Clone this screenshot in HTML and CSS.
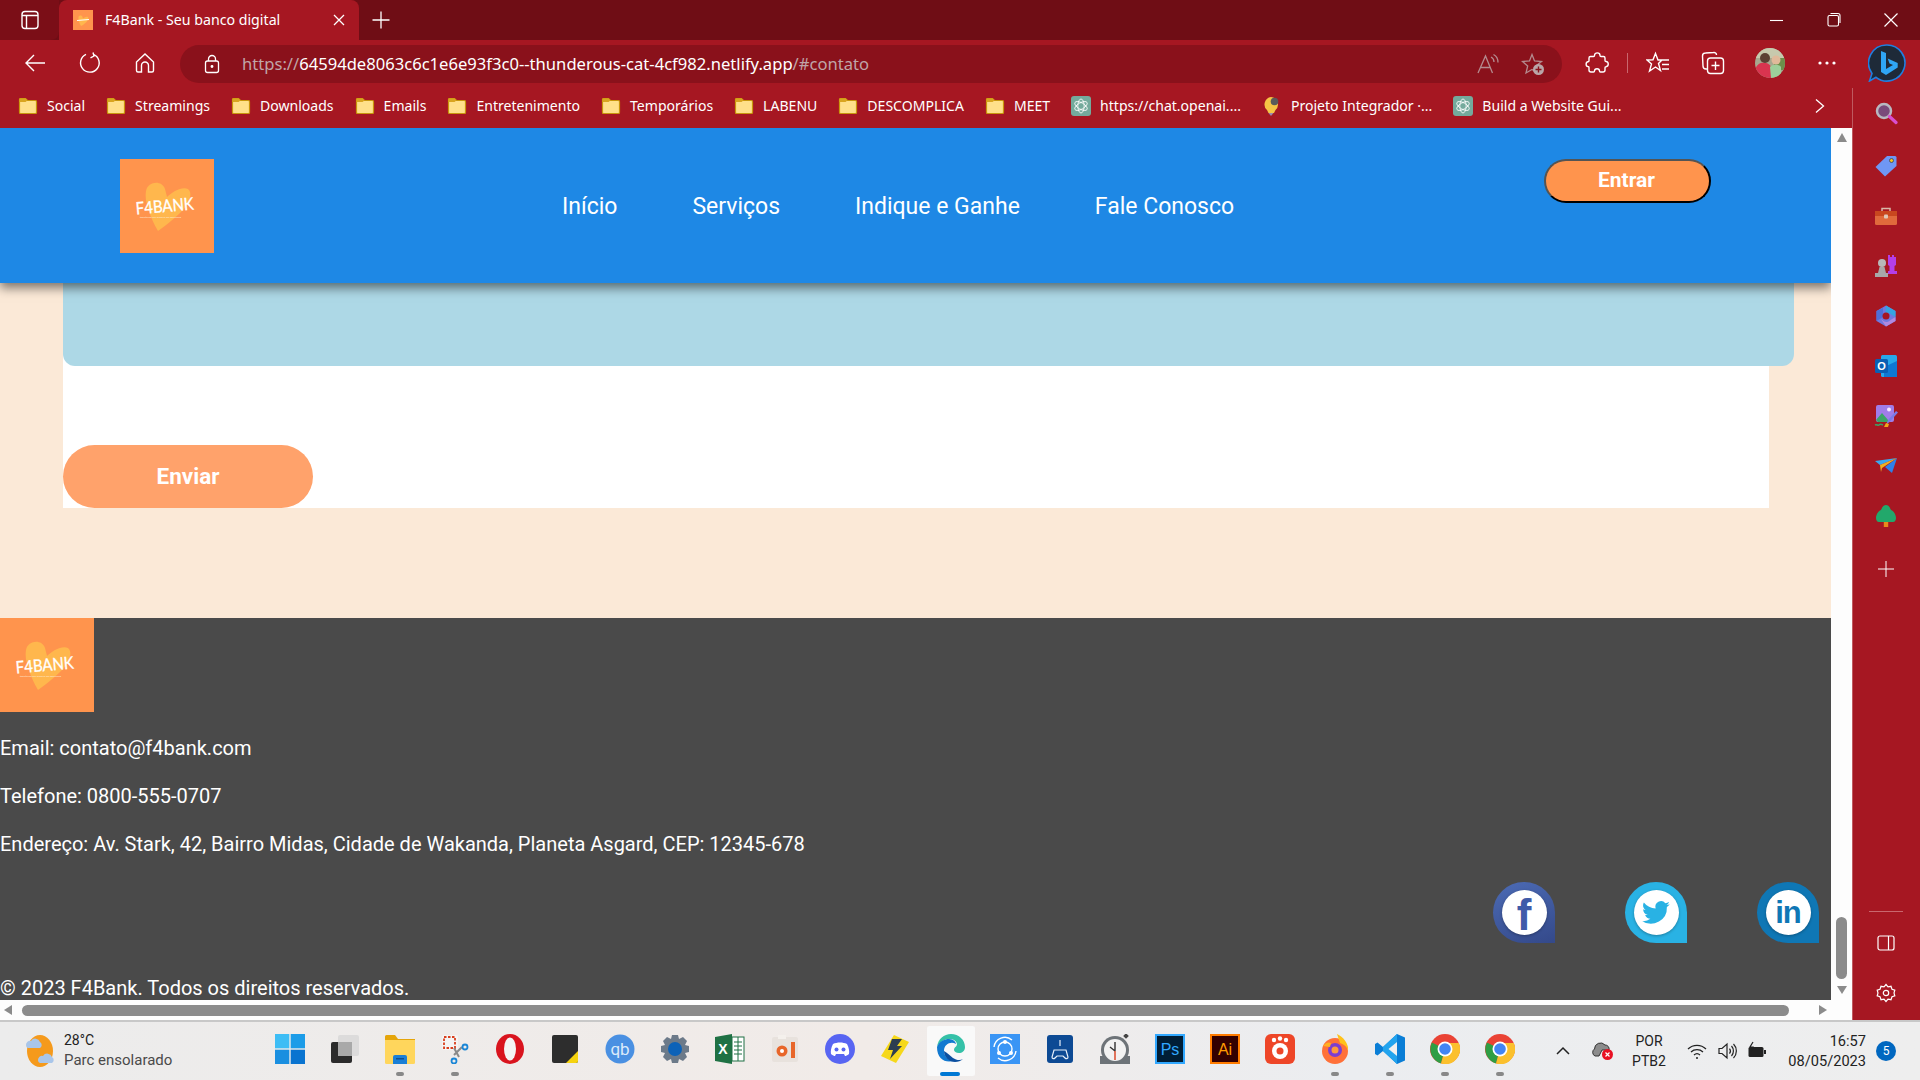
FILE: index.html
```html
<!DOCTYPE html>
<html lang="pt-BR">
<head>
<meta charset="utf-8">
<title>F4Bank - Seu banco digital</title>
<link rel="stylesheet" href="styles.css">
</head>
<body>
<svg class="sprite" aria-hidden="true">
  <symbol id="folder" viewBox="0 0 20 20"><path d="M1.500 3.500a1 1 0 0 1 1-1h5l2 2h8a1 1 0 0 1 1 1v11a1 1 0 0 1-1 1h-15a1 1 0 0 1-1-1z" fill="#ffe08a" stroke="#c8960c" stroke-width="1.200"/><path d="M1.500 3.500a1 1 0 0 1 1-1h5l2 2-2 1.500h-6z" fill="#d9a520"/></symbol>
  <symbol id="knot" viewBox="0 0 20 20"><rect width="20" height="20" rx="3" fill="#74aa9c"/><g fill="none" stroke="#fff" stroke-width=".8"><ellipse cx="10" cy="10" rx="3.200" ry="7"/><ellipse cx="10" cy="10" rx="3.200" ry="7" transform="rotate(60 10 10)"/><ellipse cx="10" cy="10" rx="3.200" ry="7" transform="rotate(120 10 10)"/></g></symbol>
  <symbol id="chrome" viewBox="0 0 30 30"><circle cx="15" cy="15" r="15" fill="#ea4335"/><path d="M15 15 1.900 8.500A15 15 0 0 0 11 29.500z" fill="#2f9e44"/><path d="M15 15l-4 14.500A15 15 0 0 0 28.800 9H15z" fill="#fbc02d"/><circle cx="15" cy="15" r="7.500" fill="#fff"/><circle cx="15" cy="15" r="5.800" fill="#4285f4"/></symbol>
</svg>
<div class="tabstrip">
  <div class="tab-toggle"><svg class="i20" viewBox="0 0 20 20" fill="none" stroke="#fff" stroke-width="1.4"><rect x="2" y="1.5" width="16" height="17" rx="3"/><path d="M2 5.5h16M6.5 5.5v13"/></svg></div>
  <div class="tab">
    <svg class="i20" viewBox="0 0 20 20"><rect width="20" height="20" fill="#ff944d"/><path d="M8 16C6 13 5 9 5.500 7 6 5 9 5 9.500 7L10 8.500C11 7.500 13.500 6 15 7 16 8 15 10 13.500 12 12 13.500 10 15 8 16Z" fill="#ffb74d"/><path d="M4 10.500 16 9.500" stroke="#fff" stroke-width="1.200"/></svg>
    <span class="tab-title">F4Bank - Seu banco digital</span>
    <svg class="i16 tab-close" viewBox="0 0 16 16" stroke="#fff" stroke-width="1.300"><path d="M3 3l10 10M13 3L3 13"/></svg>
  </div>
  <svg class="i20 tab-plus" viewBox="0 0 20 20" stroke="#fff" stroke-width="1.300"><path d="M10 1.500v17M1.500 10h17"/></svg>
  <div class="win-controls">
    <svg class="i16" viewBox="0 0 16 16" stroke="#fff" stroke-width="1.100"><path d="M1 8.500h13"/></svg>
    <svg class="i16" viewBox="0 0 16 16" fill="none" stroke="#fff" stroke-width="1.100"><rect x="2" y="3.500" width="10.500" height="10.500" rx="1.500"/><path d="M4.500 1.500h7.500a2 2 0 0 1 2 2v7.500"/></svg>
    <svg class="i16" viewBox="0 0 16 16" stroke="#fff" stroke-width="1.200"><path d="M1.500 1.500l13 13M14.500 1.500l-13 13"/></svg>
  </div>
</div>

<div class="toolbar">
  <div class="nav-buttons">
    <svg class="i22" viewBox="0 0 22 22" fill="none" stroke="#fff" stroke-width="1.400"><path d="M21 11H2M10 3l-8 8 8 8"/></svg>
    <svg class="i22" viewBox="0 0 22 22" fill="none" stroke="#fff" stroke-width="1.400"><path d="M14.500 2.300A9.300 9.300 0 1 1 7 2.400M14 .5l1 3.500-3.500 1.800"/></svg>
    <svg class="i22" viewBox="0 0 22 22" fill="none" stroke="#fff" stroke-width="1.400"><path d="M2.500 10 11 2l8.500 8v8.500a1.500 1.500 0 0 1-1.500 1.500h-3.500v-6.500a3.500 3.500 0 0 0-7 0V20H4a1.500 1.500 0 0 1-1.500-1.500z"/></svg>
  </div>
  <div class="address">
    <svg class="i20" viewBox="0 0 20 20" fill="none" stroke="#fff" stroke-width="1.300"><rect x="3.500" y="7" width="13" height="11.500" rx="2"/><path d="M6.500 7V5a3.500 3.500 0 0 1 7 0v2"/><circle cx="10" cy="12.500" r=".8" fill="#fff"/></svg>
    <div class="url"><span class="url-dim">https://</span>64594de8063c6c1e6e93f3c0--thunderous-cat-4cf982.netlify.app<span class="url-dim">/#contato</span></div>
    <svg class="i24 addr-read" viewBox="0 0 24 24" fill="none" stroke="#b48a8e" stroke-width="1.300"><path d="M2 21 9.500 4l7 17M4.500 15.500h10M15 5c2 1 3 3 3 5M17.500 2.500c3 1.500 4.500 4.500 4.500 8"/></svg>
    <svg class="i24 addr-star" viewBox="0 0 24 24"><path d="M11 2.500 13.500 9l7 .5-5.500 4.500 1.700 7L11 17.500 5 21l1.700-7L1.500 9.500l7-.5z" fill="none" stroke="#b48a8e" stroke-width="1.300"/><circle cx="17.500" cy="17.500" r="5.500" fill="#b9a6a8"/><path d="M17.500 14.500v6M14.500 17.500h6" stroke="#8a111b" stroke-width="1.400"/></svg>
  </div>
  <svg class="i24 tool-ext" viewBox="0 0 24 24" fill="none" stroke="#fff" stroke-width="1.400"><path d="M9.500 4.500c0-3.500 5.500-3.500 5.500 0 0 .8 .5 1 1 1h2.500a1.500 1.500 0 0 1 1.500 1.500v2.500c0 .5 .3 1 1 1 3 .2 3 5 0 5.200-.7 0-1 .5-1 1v2.300a2 2 0 0 1-2 2h-2.500c-.6 0-1-.4-1-1 0-3-5-3-5 0 0 .6-.4 1-1 1H6a2 2 0 0 1-2-2v-2.500c0-.6-.4-1-1-1-2.500-.2-2.500-4.500 0-4.800 .6 0 1-.4 1-1V7a1.500 1.500 0 0 1 1.500-1.500H8.500c.6 0 1-.4 1-1z"/></svg>
  <div class="tool-divider"></div>
  <svg class="i24 tool-fav" viewBox="0 0 24 24" fill="none" stroke="#fff" stroke-width="1.400"><path d="M9.500 2.500 12 9h4l-3.500 3.500 2 7-5-3.500-6 4 2-7L1 9l6-.2zM15 9h8M16 13.500h7M16 18h7"/></svg>
  <svg class="i24 tool-coll" viewBox="0 0 24 24" fill="none" stroke="#fff" stroke-width="1.400"><path d="M7 18H5a3 3 0 0 1-3-3L1.500 5A3 3 0 0 1 4.500 2l8-.5a2.500 2.500 0 0 1 3 2.500"/><rect x="6.500" y="7" width="16" height="15.500" rx="3"/><path d="M14.500 10.500v8.500M10.500 14.500h8"/></svg>
  <svg class="avatar" viewBox="0 0 30 30"><defs><clipPath id="ava"><circle cx="15" cy="15" r="15"/></clipPath></defs><g clip-path="url(#ava)"><rect width="30" height="30" fill="#a7a78f"/><rect y="0" width="30" height="10" fill="#c7c9ad"/><rect x="19" y="10" width="11" height="12" fill="#6d8f4a"/><path d="M0 22c2-7 7-8 11-7 5 1 7 6 8 15H0z" fill="#d9344f"/><circle cx="10" cy="10" r="5" fill="#5c4033"/><circle cx="21" cy="12" r="4.500" fill="#e0b99a"/><path d="M15 19c2-3 9-3 11 0v11H16z" fill="#9ccf9a"/></g></svg>
  <svg class="i24 tool-more" viewBox="0 0 24 24" fill="#fff"><circle cx="5" cy="12" r="1.600"/><circle cx="12" cy="12" r="1.600"/><circle cx="19" cy="12" r="1.600"/></svg>
  <svg class="bing" viewBox="0 0 38 38"><path d="M19 1a18 18 0 1 1-11 32.300L1.500 37 4 29.500A18 18 0 0 1 19 1z" fill="#1e2a38" stroke="#1f7fe0" stroke-width="1.600"/><path d="M13 7l5 2v16l7-4-3.500-1.500-1.800-5 10 4.500v4.500L18 31l-5-3z" fill="#2fa6f5"/></svg>
</div>

<div class="workspace">
  <div class="main-col">
    <div class="bookmarks">
      <div class="bm"><svg class="folder"><use href="#folder"/></svg><span>Social</span></div>
      <div class="bm"><svg class="folder"><use href="#folder"/></svg><span>Streamings</span></div>
      <div class="bm"><svg class="folder"><use href="#folder"/></svg><span>Downloads</span></div>
      <div class="bm"><svg class="folder"><use href="#folder"/></svg><span>Emails</span></div>
      <div class="bm"><svg class="folder"><use href="#folder"/></svg><span>Entretenimento</span></div>
      <div class="bm"><svg class="folder"><use href="#folder"/></svg><span>Temporários</span></div>
      <div class="bm"><svg class="folder"><use href="#folder"/></svg><span>LABENU</span></div>
      <div class="bm"><svg class="folder"><use href="#folder"/></svg><span>DESCOMPLICA</span></div>
      <div class="bm"><svg class="folder"><use href="#folder"/></svg><span>MEET</span></div>
      <div class="bm"><svg class="folder"><use href="#knot"/></svg><span>https://chat.openai....</span></div>
      <div class="bm"><svg class="folder" viewBox="0 0 20 20"><path d="M9 1a7.500 7.500 0 0 1 4.500 13l-1.500 3H6.500l-1.500-3A7.500 7.500 0 0 1 9 1z" fill="#f6c445"/><circle cx="12.500" cy="5.500" r="3.800" fill="#5a5a5a"/><path d="M6.500 17h5l-2.500 3z" fill="#9a8ab0"/></svg><span>Projeto Integrador ·...</span></div>
      <div class="bm"><svg class="folder"><use href="#knot"/></svg><span>Build a Website Gui...</span></div>
      <svg class="i16 bm-more" viewBox="0 0 16 16" fill="none" stroke="#fff" stroke-width="1.300"><path d="M4 1.500l7.500 6.500L4 14.500"/></svg>
    </div>
    <div class="view">
      <div class="page-row">
        <div class="page">
          <header class="site-header">
            <svg class="logo" viewBox="0 0 94 94"><rect width="94" height="94" fill="#ff944d"/><path d="M38 72C30 58 24 42 26 32 28 22 42 21 45 30L47 38C52 33 62 27 68 30 73 34 70 44 62 52 54 60 44 68 38 72Z" fill="#ffb74d"/><text x="16" y="53" class="logo-name" textLength="58" lengthAdjust="spacingAndGlyphs" transform="rotate(-5 45 50)">F4BANK</text><text x="20" y="58.500" class="logo-sub">transforme seu dinheiro em excelência</text></svg>
            <nav class="site-nav"><a>Início</a><a>Serviços</a><a>Indique e Ganhe</a><a>Fale Conosco</a></nav>
            <button class="enter">Entrar</button>
          </header>
          <section class="contact">
            <form class="contact-form">
              <div class="message"></div>
              <button class="send" type="button">Enviar</button>
            </form>
          </section>
          <footer class="site-footer">
            <svg class="logo" viewBox="0 0 94 94"><rect width="94" height="94" fill="#ff944d"/><path d="M38 72C30 58 24 42 26 32 28 22 42 21 45 30L47 38C52 33 62 27 68 30 73 34 70 44 62 52 54 60 44 68 38 72Z" fill="#ffb74d"/><text x="16" y="53" class="logo-name" textLength="58" lengthAdjust="spacingAndGlyphs" transform="rotate(-5 45 50)">F4BANK</text><text x="20" y="58.500" class="logo-sub">transforme seu dinheiro em excelência</text></svg>
            <p>Email: contato@f4bank.com</p>
            <p>Telefone: 0800-555-0707</p>
            <p>Endereço: Av. Stark, 42, Bairro Midas, Cidade de Wakanda, Planeta Asgard, CEP: 12345-678</p>
            <div class="socials">
              <div class="social fb"><div class="social-in"><span class="fb-f">f</span></div></div>
              <div class="social tw"><div class="social-in"><svg class="tw-bird" viewBox="0 0 24 24"><path d="M23 4.900c-.8.400-1.700.6-2.600.7.900-.6 1.700-1.400 2-2.500-.9.500-1.900.9-2.900 1.100A4.500 4.500 0 0 0 11.700 8.300C8 8.100 4.600 6.300 2.300 3.500c-1.200 2.100-.6 4.700 1.400 6-.7 0-1.400-.2-2-.6 0 2.200 1.500 4.100 3.600 4.500-.7.200-1.400.2-2 .1.600 1.800 2.300 3.100 4.200 3.100A9 9 0 0 1 1 18.500 12.800 12.800 0 0 0 20.700 7.100c.9-.6 1.700-1.400 2.300-2.200z" fill="#29b2e4"/></svg></div></div>
              <div class="social li"><div class="social-in"><span class="li-in">in</span></div></div>
            </div>
            <div class="copy">© 2023 F4Bank. Todos os direitos reservados.</div>
          </footer>
        </div>
        <div class="vscroll">
          <i class="arrow-up"></i>
          <i class="vthumb"></i>
          <i class="arrow-down"></i>
        </div>
      </div>
      <div class="hscroll">
        <i class="arrow-left"></i>
        <i class="hthumb"></i>
        <i class="arrow-right"></i>
      </div>
    </div>
  </div>
  <aside class="sidebar">
    <svg class="side-icon side-first" viewBox="0 0 24 24"><circle cx="10" cy="10" r="7" fill="#7a4a7a" stroke="#b8b8c0" stroke-width="2.500"/><path d="M15.500 15.500 22 21.500" stroke="#d94fd0" stroke-width="3.200" stroke-linecap="round"/></svg>
    <svg class="side-icon" viewBox="0 0 24 24"><path d="M13 2h8a1.500 1.500 0 0 1 1.500 1.500V12L11 22.500 1.500 13z" fill="#6f97f5"/><circle cx="17.500" cy="6.500" r="2" fill="#f5c518" stroke="#34406a" stroke-width=".8"/></svg>
    <svg class="side-icon" viewBox="0 0 24 24"><path d="M8 7V4.500h8V7" fill="none" stroke="#d9b8a8" stroke-width="1.500"/><rect x="1" y="7" width="22" height="14" rx="1.500" fill="#e06a3c"/><rect x="1" y="7" width="22" height="5" fill="#c9471f"/><rect x="10" y="10.500" width="4" height="4" rx="1" fill="#e0c8b8"/></svg>
    <svg class="side-icon" viewBox="0 0 24 24"><path d="M14 1h2v2h2V1h2v2h2V1v10l-1.500 1v5H23v3h-9v-3h1.500v-5L14 11z" fill="#b43ee8"/><circle cx="8" cy="9" r="4" fill="#b8b8b8"/><path d="M5.500 13h5l1.500 6h2v4H1v-4h3z" fill="#a8a8a8"/></svg>
    <svg class="side-icon" viewBox="0 0 24 24"><path d="M12 1.500 21.500 7v10L12 22.500 2.500 17V7z" fill="#6f79e0"/><path d="M12 1.500 21.500 7v6l-5-3a5 5 0 0 0-5-1z" fill="#35a4e0"/><path d="M2.500 7 9 4v9l-6.500 4z" fill="#4f6fd8"/><path d="M7 15l5 7.500 9.500-5.500v-4l-5 3a5 5 0 0 1-7 1z" fill="#b089e0"/><circle cx="12" cy="12" r="3.500" fill="#a61722"/></svg>
    <svg class="side-icon" viewBox="0 0 24 24"><rect x="7" y="1" width="16" height="22" rx="1.500" fill="#28a8ea"/><path d="M10 13l13-6v16H10z" fill="#0f78d4"/><rect x="1" y="5" width="13" height="14" rx="1.500" fill="#0a5fb4"/><text x="7.500" y="16" class="side-o">O</text></svg>
    <svg class="side-icon" viewBox="0 0 24 24"><rect x="2" y="1" width="18" height="17" rx="2" fill="#a07ce8"/><circle cx="15" cy="5.500" r="2" fill="#f3e6ff"/><path d="M2 16l6-7 6 7v2H4z" fill="#3aa566"/><path d="M12 21l2-5 8-9 2 1.500-8 9z" fill="#7a7ae8"/><path d="M10 23l2-4 3 1-1 3z" fill="#f0a818"/><path d="M1 21c2-1 3 1 4 0s2-1 4 0" fill="none" stroke="#3aa566" stroke-width="1.500"/></svg>
    <svg class="side-icon" viewBox="0 0 24 24"><path d="M1 7 23 4 6 11z" fill="#3aa8f0"/><path d="M23 4 18 19l-7-6z" fill="#2f80e8"/><path d="M6 11 23 4 8 14l-1 4z" fill="#f0b020"/></svg>
    <svg class="side-icon" viewBox="0 0 24 24"><path d="M12 1c3 0 4 3 5 5 3 1 5 5 5 8 0 2-1 4-3 4H5c-2 0-3-2-3-4 0-3 2-7 5-8 1-2 2-5 5-5z" fill="#22a86b"/><rect x="9.800" y="18" width="4.400" height="5" fill="#e88a1a"/></svg>
    <svg class="side-plus" viewBox="0 0 16 16" stroke="#fff" stroke-width="1"><path d="M8 0v16M0 8h16"/></svg>
    <div class="side-rule"></div>
    <svg class="side-tool" viewBox="0 0 20 20" fill="none" stroke="#fff" stroke-width="1.200"><rect x="2" y="3" width="16" height="14" rx="2"/><path d="M12.500 3v14"/></svg>
    <svg class="side-tool" viewBox="0 0 20 20" fill="none" stroke="#fff" stroke-width="1.200"><path d="M10 1.500l2 2.300 3-.5 1 2.900 2.800 1L18 10l.8 2.800-2.800 1-1 2.900-3-.5-2 2.300-2-2.300-3 .5-1-2.900-2.800-1L2 10l-.8-2.800 2.800-1 1-2.900 3 .5z"/><circle cx="10" cy="10" r="2.700"/></svg>
  </aside>
</div>

<div class="taskbar">
  <div class="weather">
    <svg class="weather-icon" viewBox="0 0 32 36"><ellipse cx="16" cy="18" rx="13" ry="16" fill="#f59a1c"/><path d="M2 12a4 4 0 0 1 5-4 5 5 0 0 1 9 1 3.500 3.500 0 0 1 0 6H4a3 3 0 0 1-2-3z" fill="#a9c6ea"/><path d="M14 27a4 4 0 0 1 5-4 5 5 0 0 1 9 1 3.500 3.500 0 0 1 0 6H16a3 3 0 0 1-2-3z" fill="#a9c6ea"/></svg>
    <div class="weather-text"><div class="w-temp">28°C</div><div class="w-desc">Parc ensolarado</div></div>
  </div>
  <div class="apps">
    <div class="app"><svg class="app-i" viewBox="0 0 30 30"><rect x="0" y="0" width="14.300" height="14.300" fill="#3dbdf5"/><rect x="15.700" y="0" width="14.300" height="14.300" fill="#1c9ce8"/><rect x="0" y="15.700" width="14.300" height="14.300" fill="#1a8fe0"/><rect x="15.700" y="15.700" width="14.300" height="14.300" fill="#0a74d0"/></svg></div>
    <div class="app"><svg class="app-i" viewBox="0 0 30 30"><rect x="1" y="8" width="21" height="21" rx="2" fill="#2b2b2b"/><rect x="8" y="1" width="21" height="21" rx="2" fill="#d8d8d8" fill-opacity=".85"/><rect x="8" y="8" width="14" height="14" fill="#a9a9a9"/></svg></div>
    <div class="app"><svg class="app-i" viewBox="0 0 30 30"><path d="M0 2.500A1.500 1.500 0 0 1 1.500 1H10l3 4h17v4H0z" fill="#e5a50a"/><path d="M0 6h30v22.500a1.500 1.500 0 0 1-1.500 1.500h-27A1.500 1.500 0 0 1 0 28.500z" fill="#ffd65c"/><path d="M8 23a2 2 0 0 1 2-2h10a2 2 0 0 1 2 2v7H8z" fill="#1a7fd6"/><rect x="11" y="24" width="8" height="1.500" fill="#0f4f90"/></svg><i class="dot"></i></div>
    <div class="app"><svg class="app-i" viewBox="0 0 30 30"><rect x="2" y="1" width="16" height="15" rx="2" fill="#f4f4f4"/><rect x="4" y="3" width="11" height="11" fill="none" stroke="#d9401f" stroke-width="1.800" stroke-dasharray="2.500 1.500"/><path d="M14 14l5 9M22 13l-8 8" stroke="#8a8a8a" stroke-width="2"/><circle cx="25" cy="13" r="2.500" fill="none" stroke="#1a86d6" stroke-width="1.800"/><circle cx="14" cy="27" r="2.500" fill="none" stroke="#1a86d6" stroke-width="1.800"/></svg><i class="dot"></i></div>
    <div class="app"><svg class="app-i" viewBox="0 0 30 30"><ellipse cx="15" cy="15" rx="14" ry="15" fill="#d9141e"/><ellipse cx="15" cy="15" rx="6" ry="11.500" fill="#f4f4f4"/></svg></div>
    <div class="app"><svg class="app-i" viewBox="0 0 30 30"><rect x="2" y="1" width="26" height="28" rx="2" fill="#2d2d2d"/><path d="M28 17v10a2 2 0 0 1-2 2H16z" fill="#f6d30f"/></svg></div>
    <div class="app"><svg class="app-i" viewBox="0 0 30 30"><circle cx="15" cy="15" r="14.500" fill="#4a90e2"/><text x="15" y="21" class="qb">qb</text></svg></div>
    <div class="app"><svg class="app-i" viewBox="0 0 30 30"><path d="M12 1h6l1 4 4-2 4 4-2 4 4 1v6l-4 1 2 4-4 4-4-2-1 4h-6l-1-4-4 2-4-4 2-4-4-1v-6l4-1-2-4 4-4 4 2z" fill="#6c7a89"/><circle cx="15" cy="15" r="7" fill="#0c62b8"/></svg></div>
    <div class="app"><svg class="app-i" viewBox="0 0 30 30"><path d="M0 3 17 0v30L0 27z" fill="#1f7144"/><rect x="17" y="3" width="12" height="24" fill="#fff" stroke="#1f7144"/><path d="M19 8h8M19 12h8M19 16h8M19 20h8M23 3v24" stroke="#1f7144" stroke-width="1"/><text x="8" y="20" class="xl">X</text></svg></div>
    <div class="app"><svg class="app-i" viewBox="0 0 30 30"><rect x="2" y="3" width="26" height="25" rx="2" fill="#e8e2dd"/><rect x="8" y="1" width="8" height="4" fill="#f4f0ec"/><circle cx="12" cy="17" r="5.500" fill="#e8662a"/><circle cx="12" cy="17" r="2" fill="#fff"/><rect x="21" y="8" width="4" height="16" fill="#e8662a"/></svg></div>
    <div class="app"><svg class="app-i" viewBox="0 0 30 30"><ellipse cx="15" cy="15" rx="15" ry="15" fill="#5865f2"/><path d="M8 10c4-2 10-2 14 0 2 4 2.500 7 2 10-2 1.500-3 2-4 2l-1-2H11l-1 2c-1 0-2-.5-4-2-.5-3 0-6 2-10z" fill="#fff"/><circle cx="11.500" cy="15.500" r="2" fill="#5865f2"/><circle cx="18.500" cy="15.500" r="2" fill="#5865f2"/></svg></div>
    <div class="app"><svg class="app-i" viewBox="0 0 30 30"><path d="M14 1 29 8 16 29 1 22z" fill="#f6d81a"/><path d="M12 5h10l-5 7h5L10 25l3-9H8z" fill="#2c3e50"/></svg></div>
    <div class="app app-active"><svg class="app-i" viewBox="0 0 30 30"><path d="M2 13C3 5 9 0 16 0c8 0 14 6 14 13 0 4-3 6-6 6-3 0-5-2-5-3 0-3 3-3 3-6 0-2-3-5-7-5-6 0-11 3-13 8z" fill="#35c1a8"/><path d="M2 13c2-6 8-8 12-8 4 0 7 3 7 5-5-3-12 0-12 7 0 5 4 9 9 10-8 2-16-2-16-14z" fill="#1279d0"/><path d="M9 17c0 6 5 11 11 11 3 0 6-1 8-3-3 2-7 1-10-1-3-2-5-5-9-7z" fill="#0c50a0"/></svg><i class="dot dot-blue"></i></div>
    <div class="app"><svg class="app-i" viewBox="0 0 30 30"><rect width="30" height="30" fill="#3a95f5"/><g fill="none" stroke="#fff" stroke-width="1.400"><circle cx="15" cy="15" r="7"/><path d="M4 13a11 11 0 0 1 18-7M26 17a11 11 0 0 1-18 7"/></g><g fill="#fff"><circle cx="15" cy="8" r="2"/><circle cx="9" cy="19" r="2"/><circle cx="21" cy="19" r="2"/></g></svg></div>
    <div class="app"><svg class="app-i" viewBox="0 0 30 30"><rect x="2" y="1" width="26" height="28" rx="3" fill="#0d4a94"/><path d="M9 16h12l2 7c0 2-2 2-3 1l-2-2h-6l-2 2c-1 1-3 1-3-1zM15 6v6" fill="none" stroke="#e8f0fa" stroke-width="1.200"/></svg></div>
    <div class="app"><svg class="app-i" viewBox="0 0 30 30"><rect y="22" width="30" height="8" fill="#6d7378"/><circle cx="15" cy="16" r="14" fill="#6d7378"/><circle cx="15" cy="16" r="11" fill="#f2f2f2"/><path d="M15 8v9M15 17l-5-4" stroke="#333" stroke-width="1.400"/><path d="M15 17v9" stroke="#d9401f" stroke-width="1.400"/><rect x="24" y="0" width="4" height="4" fill="#444" transform="rotate(45 26 2)"/></svg></div>
    <div class="app"><svg class="app-i" viewBox="0 0 30 30"><rect x="1" y="1" width="28" height="28" fill="#001e36" stroke="#31a8ff" stroke-width="2"/><text x="15" y="21" class="ps">Ps</text></svg></div>
    <div class="app"><svg class="app-i" viewBox="0 0 30 30"><rect x="1" y="1" width="28" height="28" fill="#330000" stroke="#ff7c00" stroke-width="2"/><text x="15" y="21" class="ai">Ai</text></svg></div>
    <div class="app"><svg class="app-i" viewBox="0 0 30 30"><rect width="30" height="30" rx="6" fill="#ee4628"/><circle cx="15" cy="17" r="8" fill="#fff"/><circle cx="15" cy="17" r="3.500" fill="#ee4628"/><circle cx="9" cy="6" r="2.200" fill="#fff"/><circle cx="15" cy="4.500" r="2.200" fill="#fff"/><circle cx="21" cy="6" r="2.200" fill="#fff"/></svg></div>
    <div class="app"><svg class="app-i" viewBox="0 0 30 30"><circle cx="15" cy="17" r="13" fill="#ff7139"/><path d="M17 0c6 3 12 9 11 17-1-5-5-7-8-8z" fill="#ffc21a"/><circle cx="15" cy="16" r="7" fill="#7c3ed0"/><path d="M3 12c3-4 6-4 8-3l-1 4z" fill="#ffb020"/><circle cx="15" cy="16" r="3.500" fill="#ff9a3c"/></svg><i class="dot"></i></div>
    <div class="app"><svg class="app-i" viewBox="0 0 30 30"><path d="M22 0 30 3.500v23L22 30 8 17 2.500 21.500 0 20V10l2.500-1.500L8 13z" fill="#0a7ed6"/><path d="M22 0v30L8 17l-.1-4z" fill="#22a4ee"/><path d="M22 8l-8.500 7 8.500 7z" fill="#f0f0f0"/></svg><i class="dot"></i></div>
    <div class="app"><svg class="app-i"><use href="#chrome"/></svg><i class="dot"></i></div>
    <div class="app"><svg class="app-i"><use href="#chrome"/></svg><i class="dot"></i></div>
  </div>
  <div class="tray">
    <svg class="tray-caret" viewBox="0 0 16 16" fill="none" stroke="#222" stroke-width="1.500"><path d="M2 11l6-6 6 6"/></svg>
    <svg class="tray-cloud" viewBox="0 0 22 20"><path d="M3 15a4 4 0 0 1-.5-7A6 6 0 0 1 13 4a4 4 0 0 1 4 5H10l-3 6z" fill="#8c8c8c" stroke="#333" stroke-width="1"/><circle cx="15.500" cy="13.500" r="5.500" fill="#e81123"/><path d="M13.500 11.500l4 4M17.500 11.500l-4 4" stroke="#fff" stroke-width="1.200"/></svg>
    <div class="lang"><div>POR</div><div>PTB2</div></div>
    <svg class="tray-i" viewBox="0 0 20 20" fill="none" stroke="#222" stroke-width="1.300"><path d="M1 8a13 13 0 0 1 18 0M4 11a9 9 0 0 1 12 0M7 14a4.500 4.500 0 0 1 6 0"/><circle cx="10" cy="17" r="1" fill="#222" stroke="none"/></svg>
    <svg class="tray-i" viewBox="0 0 20 20" fill="none" stroke="#222" stroke-width="1.200"><path d="M2 7.500h3L10 3v14l-5-4.500H2zM12.500 7.500a4 4 0 0 1 0 5M14.500 5a7.500 7.500 0 0 1 0 10M16.500 3a10 10 0 0 1 0 14"/></svg>
    <svg class="tray-i" viewBox="0 0 20 20"><rect x="1.500" y="6" width="15" height="10" rx="1.500" fill="#222"/><rect x="17" y="9" width="2" height="4" fill="#222"/><path d="M6 1 3 6h3L4.500 10" fill="none" stroke="#222" stroke-width="1.200"/></svg>
    <div class="clock"><div>16:57</div><div>08/05/2023</div></div>
    <div class="badge">5</div>
  </div>
</div>
</body>
</html>
```
FILE: styles.css
```css
* { box-sizing: border-box; }
html, body { margin: 0; height: 100%; }
body {
  width: 1920px; height: 1080px; overflow: hidden;
  display: flex; flex-direction: column;
  font-family: Roboto, "Liberation Sans", sans-serif;
  background: #a61722;
}
svg { display: block; flex: none; }
.sprite { display: none; }
.i16 { width: 16px; height: 16px; }
.i20 { width: 20px; height: 20px; }
.i22 { width: 22px; height: 22px; }
.i24 { width: 24px; height: 24px; }

/* tab strip */
.tabstrip { height: 40px; flex: none; display: flex; align-items: center; background: #6f0d15; padding-right: 21px; }
.tab-toggle { width: 59px; height: 40px; display: flex; align-items: center; padding-left: 20px; background: #7b0e17; border-bottom-right-radius: 8px; }
.tab { width: 300px; height: 40px; background: #a61722; border-radius: 8px 8px 0 0; display: flex; align-items: center; padding: 0 12px 0 14px; color: #fff; font-size: 14px; }
.tab-title { margin-left: 12px; padding-bottom: 2px; font-family: "Noto Sans", sans-serif; font-size: 14.2px; }
.tab-close { margin-left: auto; }
.tab-plus { margin-left: 12px; }
.win-controls { margin-left: auto; display: flex; gap: 41px; }

/* toolbar */
.toolbar { height: 44px; flex: none; display: flex; align-items: center; background: #a61722; padding: 2px 0 0 24px; }
.nav-buttons { display: flex; gap: 33px; width: 156px; }
.address { width: 1382px; height: 38px; margin-top: 2px; background: #8a111b; border-radius: 19px; display: flex; align-items: center; padding: 0 17px 0 22px; }
.url { margin-left: 20px; padding-bottom: 2px; font-family: "Noto Sans", sans-serif; font-size: 16.6px; color: #fff; white-space: nowrap; }
.url-dim { color: #c0a5a8; }
.addr-read { margin-left: auto; }
.addr-star { margin-left: 21px; }
.tool-ext { margin-left: 23px; }
.tool-divider { width: 1px; height: 20px; margin-left: 18px; background: #c9676e; }
.tool-fav { margin-left: 18px; }
.tool-coll { margin-left: 31px; }
.avatar { width: 30px; height: 30px; margin-left: 30px; }
.tool-more { margin-left: 30px; }
.bing { width: 38px; height: 38px; margin-left: 29px; }

/* workspace */
.workspace { height: 936px; flex: none; display: flex; }
.main-col { width: 1852px; display: flex; flex-direction: column; }
.bookmarks { height: 44px; flex: none; display: flex; align-items: center; gap: 21px; padding-left: 18px; color: #fff; font-family: "Noto Sans", sans-serif; font-size: 14.05px; white-space: nowrap; }
.bm { display: flex; align-items: center; gap: 9px; }
.bm span { padding-bottom: 2px; }
.folder { width: 20px; height: 20px; }
.bm-more { margin-left: auto; margin-right: 24px; }
.view { flex: 1; display: flex; flex-direction: column; min-height: 0; }
.page-row { height: 872px; display: flex; }
.page { width: 1831px; height: 872px; overflow: hidden; display: flex; flex-direction: column; }

/* site header */
.site-header { height: 155px; flex: none; position: relative; z-index: 2; display: flex; background: #1e88e5; padding-left: 120px; padding-top: 31px; box-shadow: 0 5px 10px rgba(0,0,0,.5); clip-path: inset(0 0 -30px 0); }
.logo { width: 94px; height: 94px; }
.logo-name { font-family: Lato, sans-serif; font-weight: 400; font-size: 17px; fill: #fff; stroke: #fff; stroke-width: .3px; }
.logo-sub { font-family: Roboto, sans-serif; font-size: 2.4px; fill: #ffe9d6; }
.site-nav { display: flex; align-items: center; gap: 75px; margin-left: 348px; height: 94px; color: #fff; font-size: 23px; }
.site-nav a { white-space: nowrap; }
.enter { margin-left: auto; margin-right: 120px; width: 167px; height: 44px; border-radius: 22px; border: 2px outset #000; background: #ff944d; color: #fff; font: 700 21px Roboto, sans-serif; padding: 0 2px 2px 0; }

/* contact section */
.contact { height: 335px; flex: none; background: #fbe9d7; padding-left: 63px; }
.contact-form { width: 1706px; height: 225px; background: #fff; display: flex; flex-direction: column; align-items: flex-start; }
.message { width: 1731px; height: 83px; flex: none; background: #add8e6; border-radius: 0 0 12px 12px; }
.send { margin-top: 79px; width: 250px; height: 63px; border: 0; border-radius: 32px; background: #ffa26b; color: #fff; font: 700 22.5px Roboto, sans-serif; padding: 0 0 2px; }

/* footer */
.site-footer { flex: 1; background: #4a4a4a; color: #fff; font-size: 20px; line-height: 23px; }
.site-footer p { margin: 25px 0 0; }
.socials { display: flex; justify-content: flex-end; gap: 70px; padding-right: 12px; margin-top: 26px; }
.social { width: 62px; height: 61px; border-radius: 50% 50% 0 50%; display: flex; align-items: center; justify-content: center; }
.fb { background: linear-gradient(160deg, #4c6bb5, #34498a); }
.tw { background: #29b2e4; }
.li { background: #0f77b5; }
.social-in { width: 45px; height: 45px; border-radius: 50%; background: #fff; display: flex; align-items: center; justify-content: center; box-shadow: 0 1px 3px rgba(0,0,0,.3); }
.fb-f { font: 700 44px/45px "Liberation Sans", sans-serif; color: #3f5ba9; padding-top: 3px; }
.li-in { font: 700 31px/45px "Liberation Sans", sans-serif; color: #0f77b5; letter-spacing: -1px; }
.tw-bird { width: 30px; height: 30px; }
.copy { margin-top: 34px; white-space: nowrap; }

/* scrollbars */
.vscroll { width: 21px; height: 872px; background: #fdfdfd; display: flex; flex-direction: column; align-items: center; position: relative; }
.arrow-up { margin-top: 5px; border-left: 5.500px solid transparent; border-right: 5.500px solid transparent; border-bottom: 9px solid #8b8b8b; }
.vthumb { margin-top: auto; width: 11px; height: 62px; border-radius: 6px; background: #8b8b8b; }
.arrow-down { margin: 7px 0 6px; border-left: 5.500px solid transparent; border-right: 5.500px solid transparent; border-top: 8px solid #8b8b8b; }
.hscroll { height: 20px; flex: none; background: #fdfdfd; display: flex; align-items: center; padding: 0 25px 0 4px; }
.arrow-left { border-top: 5.500px solid transparent; border-bottom: 5.500px solid transparent; border-right: 8px solid #8b8b8b; }
.hthumb { margin-left: 10px; width: 1767px; height: 11px; border-radius: 6px; background: #8b8b8b; }
.arrow-right { margin-left: auto; border-top: 5.500px solid transparent; border-bottom: 5.500px solid transparent; border-left: 8px solid #8b8b8b; }

/* edge sidebar */
.sidebar { width: 68px; flex: none; display: flex; flex-direction: column; align-items: center; padding: 13px 1px 0 0; gap: 26px; border-left: 1px solid #bf5a60; margin-top: 4px; }
.side-icon { width: 24px; height: 24px; }
.side-first { margin-bottom: 3px; }
.side-plus { width: 16px; height: 16px; margin-top: 7px; }
.side-rule { width: 34px; height: 1px; background: #c9676e; margin-top: 308px; margin-bottom: -5px; }
.side-tool { width: 20px; height: 20px; margin-bottom: 4px; }

/* taskbar */
.taskbar { height: 60px; flex: none; display: flex; align-items: center; border-top: 2px solid #c8c8c8; background: linear-gradient(90deg, #ececec 0%, #f1ebe8 45%, #ebedf0 70%, #eeeeee 100%); color: #222; position: relative; }
.weather { display: flex; align-items: center; width: 262.500px; padding-left: 24px; flex: none; }
.weather-icon { width: 32px; height: 36px; }
.weather-text { margin: 0 0 2px 8px; font-size: 15px; line-height: 20px; white-space: nowrap; }
.w-temp { font-size: 14px; }
.w-desc { color: #4a4a4a; }
.apps { display: flex; flex: none; }
.app { width: 55px; height: 58px; display: flex; justify-content: center; align-items: center; position: relative; }
.app-i { width: 30px; height: 30px; margin-bottom: 4px; }
.dot { position: absolute; left: 23.500px; bottom: 4px; width: 8px; height: 4px; border-radius: 2px; background: #888; }
.dot-blue { left: 17.500px; width: 20px; background: #0078d4; }
.app-active { background: #f9f9f9; background-clip: content-box; padding: 4px 3.500px 4px; border-radius: 6px; }
.qb { font: 400 17px Roboto, sans-serif; fill: #dcebfa; text-anchor: middle; }
.xl { font: 700 14px "Liberation Sans", sans-serif; fill: #fff; text-anchor: middle; }
.ps { font: 400 16px "Liberation Sans", sans-serif; fill: #31a8ff; text-anchor: middle; }
.ai { font: 400 16px "Liberation Sans", sans-serif; fill: #ff9a00; text-anchor: middle; }
.side-o { font: 700 11px "Liberation Sans", sans-serif; fill: #fff; text-anchor: middle; }
.tray { display: flex; align-items: center; flex: none; margin-left: 27.500px; }
.tray-caret { width: 16px; height: 16px; }
.tray-cloud { width: 22px; height: 20px; margin-left: 21px; }
.lang { width: 56px; margin-left: 7px; text-align: center; font-size: 14px; line-height: 20px; }
.tray-i { width: 20px; height: 20px; margin-left: 10px; }
.clock { width: 99px; text-align: right; font-size: 14.600px; line-height: 20px; }
.badge { width: 20px; height: 20px; margin-left: 10px; border-radius: 50%; background: #0067c0; color: #fff; font-size: 12px; line-height: 20px; text-align: center; }
```
